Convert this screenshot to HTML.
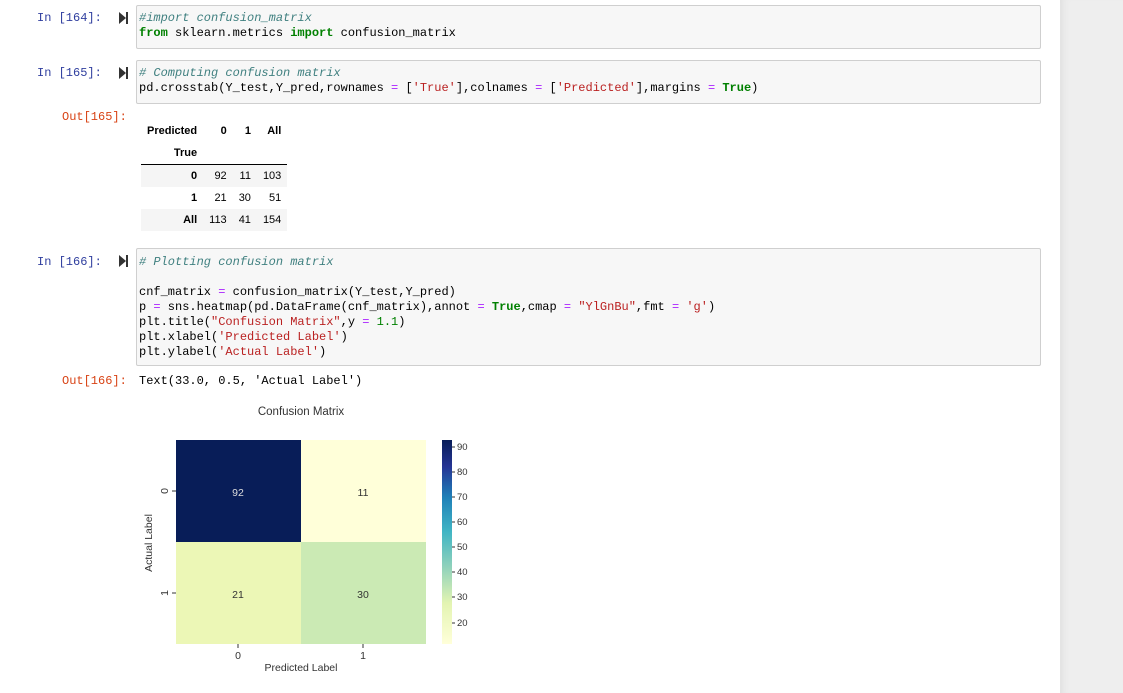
<!DOCTYPE html>
<html><head><meta charset="utf-8"><style>
body{margin:0;width:1123px;height:693px;background:#fff;position:relative;overflow:hidden;font-family:"Liberation Sans",sans-serif}
.side{position:absolute;left:1060px;top:0;width:63px;height:693px;background:#eee;box-shadow:inset 8px 0 8px -6px #ddd}
.box{position:absolute;left:136px;width:903px;background:#f7f7f7;border:1px solid #cfcfcf;border-radius:2px}
pre{margin:0;font-family:"Liberation Mono",monospace;font-size:12px;line-height:15px;color:#000;position:absolute;left:139px}
.p{position:absolute;font-family:"Liberation Mono",monospace;font-size:12px;line-height:15px}
.in{color:#303f9f}.out{color:#d84315}
.c{color:#408080;font-style:italic}.k{color:#008000;font-weight:bold}.s{color:#ba2121}.o{color:#aa22ff}.n{color:#008000}
.run{position:absolute;left:119px;width:9px;height:12px}
table{position:absolute;left:141px;top:120px;border-collapse:collapse;font-size:11px;font-family:"Liberation Sans",sans-serif}
td,th{padding:0 6px;height:22px;text-align:right}
th{font-weight:bold}
</style></head><body>
<div class="side"></div>
<div class="p in" style="left:37px;top:11px">In [164]:</div>
<svg class="run" style="top:12px" viewBox="0 0 9 12"><path d="M0 0L7 6L0 12Z" fill="#333"/><rect x="7" y="0" width="2" height="12" fill="#333"/></svg>
<div class="box" style="top:5px;height:42px"></div>
<pre style="top:11px"><span class="c">#import confusion_matrix</span>
<span class="k">from</span> sklearn.metrics <span class="k">import</span> confusion_matrix</pre>

<div class="p in" style="left:37px;top:66px">In [165]:</div>
<svg class="run" style="top:67px" viewBox="0 0 9 12"><path d="M0 0L7 6L0 12Z" fill="#333"/><rect x="7" y="0" width="2" height="12" fill="#333"/></svg>
<div class="box" style="top:60px;height:42px"></div>
<pre style="top:66px"><span class="c"># Computing confusion matrix</span>
pd.crosstab(Y_test,Y_pred,rownames <span class="o">=</span> [<span class="s">'True'</span>],colnames <span class="o">=</span> [<span class="s">'Predicted'</span>],margins <span class="o">=</span> <span class="k">True</span>)</pre>
<div class="p out" style="left:62px;top:110px">Out[165]:</div>
<table>
<tr><th style="text-align:left">Predicted</th><th>0</th><th>1</th><th>All</th></tr>
<tr style="border-bottom:1px solid #000"><th>True</th><td></td><td></td><td></td></tr>
<tr style="background:#f5f5f5"><th>0</th><td>92</td><td>11</td><td>103</td></tr>
<tr><th>1</th><td>21</td><td>30</td><td>51</td></tr>
<tr style="background:#f5f5f5"><th>All</th><td>113</td><td>41</td><td>154</td></tr>
</table>

<div class="p in" style="left:37px;top:255px">In [166]:</div>
<svg class="run" style="top:255px" viewBox="0 0 9 12"><path d="M0 0L7 6L0 12Z" fill="#333"/><rect x="7" y="0" width="2" height="12" fill="#333"/></svg>
<div class="box" style="top:248px;height:116px"></div>
<pre style="top:255px"><span class="c"># Plotting confusion matrix</span>

cnf_matrix <span class="o">=</span> confusion_matrix(Y_test,Y_pred)
p <span class="o">=</span> sns.heatmap(pd.DataFrame(cnf_matrix),annot <span class="o">=</span> <span class="k">True</span>,cmap <span class="o">=</span> <span class="s">"YlGnBu"</span>,fmt <span class="o">=</span> <span class="s">'g'</span>)
plt.title(<span class="s">"Confusion Matrix"</span>,y <span class="o">=</span> <span class="n">1.1</span>)
plt.xlabel(<span class="s">'Predicted Label'</span>)
plt.ylabel(<span class="s">'Actual Label'</span>)</pre>
<div class="p out" style="left:62px;top:374px">Out[166]:</div>
<pre style="top:374px">Text(33.0, 0.5, 'Actual Label')</pre>

<svg style="position:absolute;left:0;top:0" width="1123" height="693">
<defs><linearGradient id="g" x1="0" y1="1" x2="0" y2="0">
<stop offset="0" stop-color="#ffffd9"/><stop offset="0.2" stop-color="#e3f4b2"/><stop offset="0.38" stop-color="#8fd1bb"/><stop offset="0.55" stop-color="#40b5c4"/><stop offset="0.72" stop-color="#1f80b8"/><stop offset="0.87" stop-color="#253494"/><stop offset="1" stop-color="#081d58"/></linearGradient></defs>
<rect x="176" y="440" width="125" height="102" fill="#081d58"/>
<rect x="301" y="440" width="125" height="102" fill="#ffffd9"/>
<rect x="176" y="542" width="125" height="102" fill="#ecf7b6"/>
<rect x="301" y="542" width="125" height="102" fill="#cbeab4"/>
<rect x="442" y="440" width="10" height="204" fill="url(#g)"/>
<g font-family="Liberation Sans,sans-serif" font-size="10.5" fill="#333" text-anchor="middle">
<text x="238" y="496" fill="#ddd">92</text><text x="363" y="496">11</text>
<text x="238" y="598">21</text><text x="363" y="598">30</text>
<text x="301" y="415" font-size="11.5">Confusion Matrix</text>
<text x="238" y="659">0</text><text x="363" y="659">1</text>
<text x="301" y="671">Predicted Label</text>
<text transform="translate(168,491) rotate(-90)">0</text>
<text transform="translate(168,593) rotate(-90)">1</text>
<text transform="translate(152,543) rotate(-90)">Actual Label</text>
<g text-anchor="start" font-size="9.5">
<text x="457" y="450">90</text><text x="457" y="475">80</text><text x="457" y="500">70</text><text x="457" y="525">60</text><text x="457" y="550">50</text><text x="457" y="575">40</text><text x="457" y="600">30</text><text x="457" y="626">20</text></g>
</g>
<g stroke="#333" stroke-width="1">
<path d="M172 491h4M172 593h4M238 644v4M363 644v4"/>
<path d="M452 447h3M452 472h3M452 497h3M452 522h3M452 547h3M452 572h3M452 597h3M452 623h3"/>
</g>
</svg>
</body></html>
